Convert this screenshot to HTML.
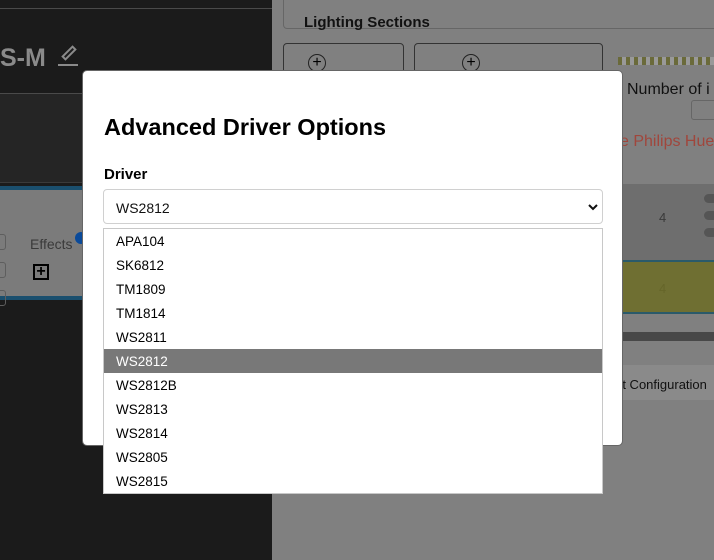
<!DOCTYPE html>
<html><head><style>
*{box-sizing:border-box;margin:0;padding:0}
body{width:714px;height:560px;overflow:hidden;position:relative;background:#808080;font-family:"Liberation Sans",sans-serif}
.abs{position:absolute;white-space:nowrap}
</style></head><body>
<div class="abs" style="left:0;top:0;width:272px;height:560px;background:#1b1b1b"></div>
<div class="abs" style="left:0;top:8px;width:272px;height:1px;background:#4a4a4a"></div>
<div class="abs" style="left:0;top:44px;font-size:25px;font-weight:bold;color:#8a8a8a">S-M</div>
<div class="abs" style="left:58px;top:64px;width:20px;height:2px;background:#8a8a8a"></div>
<div class="abs" style="left:66px;top:45px;width:6px;height:16px;border:2px solid #8a8a8a;transform:rotate(45deg)"></div>
<div class="abs" style="left:0;top:93px;width:272px;height:90px;background:#252525;border-top:1px solid #4a4a4a;border-bottom:1px solid #3a3a3a"></div>
<div class="abs" style="left:0;top:186px;width:272px;height:4px;background:#1a4f6e"></div>
<div class="abs" style="left:0;top:190px;width:272px;height:106px;background:#7b7b7b"></div>
<div class="abs" style="left:0;top:296px;width:272px;height:4px;background:#1a4f6e"></div>
<div class="abs" style="left:-4px;top:234px;width:10px;height:16px;border:1px solid #5e5e5e;border-radius:3px"></div>
<div class="abs" style="left:-4px;top:262px;width:10px;height:16px;border:1px solid #5e5e5e;border-radius:3px"></div>
<div class="abs" style="left:-4px;top:290px;width:10px;height:16px;border:1px solid #5e5e5e;border-radius:3px"></div>
<div class="abs" style="left:30px;top:236px;font-size:14px;color:#3a3a3a">Effects</div>
<div class="abs" style="left:75px;top:232px;width:12px;height:12px;border-radius:50%;background:#0a4a9a"></div>
<div class="abs" style="left:33px;top:264px;width:16px;height:16px;border:2px solid #000;font-size:16px;line-height:11px;text-align:center;font-weight:bold">+</div>
<div class="abs" style="left:283px;top:-4px;width:440px;height:33px;border:1px solid #666;border-radius:4px"></div>
<div class="abs" style="left:304px;top:14px;font-size:15px;font-weight:bold;color:#111">Lighting Sections</div>
<div class="abs" style="left:283px;top:43px;width:121px;height:40px;border:1px solid #333;border-radius:4px"></div>
<div class="abs" style="left:414px;top:43px;width:189px;height:40px;border:1px solid #333;border-radius:4px"></div>
<div class="abs" style="left:308px;top:54px;width:18px;height:18px;border:1px solid #222;border-radius:50%;text-align:center;line-height:16px;font-size:16px">+</div>
<div class="abs" style="left:462px;top:54px;width:18px;height:18px;border:1px solid #222;border-radius:50%;text-align:center;line-height:16px;font-size:16px">+</div>
<div class="abs" style="left:618px;top:57px;width:96px;height:8px;background:repeating-linear-gradient(90deg,#6a6a3a 0 4px,#999 4px 8px)"></div>
<div class="abs" style="left:627px;top:81px;font-size:16px;color:#111">Number of i</div>
<div class="abs" style="left:691px;top:100px;width:30px;height:20px;border:1px solid #666;border-radius:3px"></div>
<div class="abs" style="left:620px;top:133px;font-size:16px;color:#a0463c">e Philips Hue</div>
<div class="abs" style="left:600px;top:184px;width:114px;height:76px;background:#6e6e6e"></div>
<div class="abs" style="left:600px;top:260px;width:114px;height:54px;background:#6f6f32;border-top:2px solid #2a5a6a;border-bottom:2px solid #2a5a6a"></div>
<div class="abs" style="left:659px;top:210px;font-size:13px;color:#3a3a3a">4</div>
<div class="abs" style="left:659px;top:281px;font-size:13px;color:#66662a">4</div>
<div class="abs" style="left:704px;top:194px;width:14px;height:9px;border-radius:5px;background:#555"></div>
<div class="abs" style="left:704px;top:211px;width:14px;height:9px;border-radius:5px;background:#555"></div>
<div class="abs" style="left:704px;top:228px;width:14px;height:9px;border-radius:5px;background:#555"></div>
<div class="abs" style="left:600px;top:332px;width:114px;height:9px;background:#484848"></div>
<div class="abs" style="left:600px;top:365px;width:114px;height:35px;background:#8a8a8a"></div>
<div class="abs" style="left:618px;top:377px;font-size:13px;color:#111">rt Configuration</div>
<div class="abs" style="left:82px;top:70px;width:541px;height:376px;background:#fff;border-radius:5px;border:1px solid #666"></div>
<div class="abs" style="left:104px;top:114px;font-size:23.5px;font-weight:bold;color:#000">Advanced Driver Options</div>
<div class="abs" style="left:104px;top:166px;font-size:15px;font-weight:bold;color:#000">Driver</div>
<div class="abs" style="left:103px;top:189px;width:500px;height:35px;border:1px solid #d0d0d0;border-radius:4px;background:#fff"></div>
<div class="abs" style="left:116px;top:200px;font-size:14px;color:#111">WS2812</div>
<svg class="abs" style="left:587px;top:202px" width="12" height="10"><path d="M2 3l4 4 4-4" fill="none" stroke="#111" stroke-width="2"/></svg>
<div class="abs" style="left:103px;top:228px;width:500px;height:266px;border:1px solid #c8c8c8;background:#fff;font-size:13.5px;color:#000">
<div style="position:absolute;left:0;top:0;width:498px">
<div style="height:24px;line-height:26px;padding-left:12px">APA104</div>
<div style="height:24px;line-height:26px;padding-left:12px">SK6812</div>
<div style="height:24px;line-height:26px;padding-left:12px">TM1809</div>
<div style="height:24px;line-height:26px;padding-left:12px">TM1814</div>
<div style="height:24px;line-height:26px;padding-left:12px">WS2811</div>
<div style="height:24px;line-height:26px;padding-left:12px;background:#787878;color:#fff">WS2812</div>
<div style="height:24px;line-height:26px;padding-left:12px">WS2812B</div>
<div style="height:24px;line-height:26px;padding-left:12px">WS2813</div>
<div style="height:24px;line-height:26px;padding-left:12px">WS2814</div>
<div style="height:24px;line-height:26px;padding-left:12px">WS2805</div>
<div style="height:24px;line-height:26px;padding-left:12px">WS2815</div>
</div></div>
</body></html>
